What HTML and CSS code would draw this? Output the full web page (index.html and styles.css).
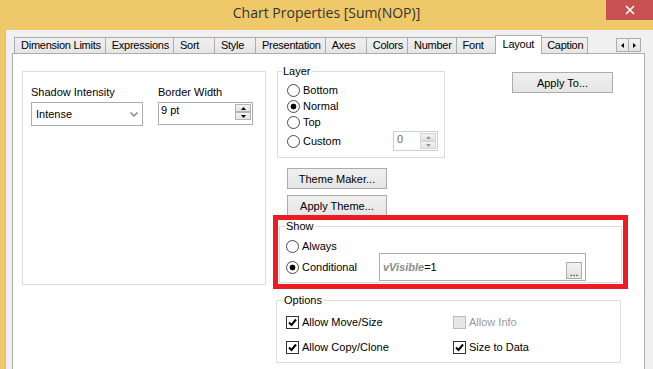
FILE: index.html
```html
<!DOCTYPE html>
<html lang="en">
<head>
    <meta charset="UTF-8">
    <title>Chart Properties [Sum(NOP)]</title>
    <link rel="stylesheet" href="styles.css">
</head>
<body>
    <div class="window">
        <div class="titlebar">
            <h1 class="title">Chart Properties [Sum(NOP)]</h1>
            <div class="close">
                <svg width="10" height="10" viewBox="0 0 10 10"><path d="M1 1 L9 9 M9 1 L1 9" stroke="#fff" stroke-width="1.6"/></svg>
            </div>
        </div>

        <div class="client">
            <div class="tabstrip">
                <div class="tabs">
                    <span class="tab">Dimension Limits</span>
                    <span class="tab">Expressions</span>
                    <span class="tab">Sort</span>
                    <span class="tab">Style</span>
                    <span class="tab">Presentation</span>
                    <span class="tab">Axes</span>
                    <span class="tab">Colors</span>
                    <span class="tab">Number</span>
                    <span class="tab">Font</span>
                    <span class="tab active">Layout</span>
                    <span class="tab">Caption</span>
                </div>
                <div class="tab-scroll">
                    <span class="scroll-btn"><svg width="3" height="5" viewBox="0 0 3 5"><path d="M3 0 L0 2.5 L3 5Z"/></svg></span>
                    <span class="scroll-btn"><svg width="3" height="5" viewBox="0 0 3 5"><path d="M0 0 L3 2.5 L0 5Z"/></svg></span>
                </div>
            </div>

            <div class="panel">
                <!-- shadow / border -->
                <div class="shadow-group">
                    <div class="field">
                        <label>Shadow Intensity</label>
                        <div class="select">
                            <span>Intense</span>
                            <svg width="8" height="5" viewBox="0 0 8 5"><path d="M0.5 0.5 L4 4 L7.5 0.5" fill="none" stroke="#888" stroke-width="1.5"/></svg>
                        </div>
                    </div>
                    <div class="field">
                        <label>Border Width</label>
                        <div class="spin border-spin">
                            <span>9 pt</span>
                            <div class="spin-btns">
                                <span class="spin-btn"><svg width="5" height="3" viewBox="0 0 5 3"><path d="M0 3 L2.5 0 L5 3Z"/></svg></span>
                                <span class="spin-btn"><svg width="5" height="3" viewBox="0 0 5 3"><path d="M0 0 L2.5 3 L5 0Z"/></svg></span>
                            </div>
                        </div>
                    </div>
                </div>

                <div class="right-col">
                    <div class="top-row">
                        <fieldset class="group layer">
                            <legend>Layer</legend>
                            <div class="radio-row"><span class="radio"></span>Bottom</div>
                            <div class="radio-row"><span class="radio checked"></span>Normal</div>
                            <div class="radio-row"><span class="radio"></span>Top</div>
                            <div class="radio-row custom-row">
                                <span class="radio"></span>Custom
                                <div class="spin custom-spin">
                                    <span>0</span>
                                    <div class="spin-btns">
                                        <span class="spin-btn"><svg width="5" height="3" viewBox="0 0 5 3"><path d="M0 3 L2.5 0 L5 3Z"/></svg></span>
                                        <span class="spin-btn"><svg width="5" height="3" viewBox="0 0 5 3"><path d="M0 0 L2.5 3 L5 0Z"/></svg></span>
                                    </div>
                                </div>
                            </div>
                        </fieldset>
                        <button class="btn apply-to">Apply To...</button>
                    </div>

                    <button class="btn theme-btn">Theme Maker...</button>
                    <button class="btn theme-btn apply-theme">Apply Theme...</button>

                    <div class="highlight">
                        <fieldset class="group show">
                            <legend>Show</legend>
                            <div class="radio-row"><span class="radio"></span>Always</div>
                            <div class="radio-row cond-row">
                                <span class="radio checked"></span>
                                <span class="cond-label">Conditional</span>
                                <div class="expr">
                                    <span><b class="var">vVisible</b>=1</span>
                                    <span class="dots">...</span>
                                </div>
                            </div>
                        </fieldset>
                    </div>

                    <fieldset class="group options">
                        <legend>Options</legend>
                        <div class="check-grid">
                            <div class="check-row"><span class="check on"><svg width="11" height="11" viewBox="0 0 11 11"><path d="M2 5.5 L4.5 8 L9 2.5" fill="none" stroke="#000" stroke-width="2"/></svg></span>Allow Move/Size</div>
                            <div class="check-row disabled"><span class="check"></span>Allow Info</div>
                            <div class="check-row"><span class="check on"><svg width="11" height="11" viewBox="0 0 11 11"><path d="M2 5.5 L4.5 8 L9 2.5" fill="none" stroke="#000" stroke-width="2"/></svg></span>Allow Copy/Clone</div>
                            <div class="check-row"><span class="check on"><svg width="11" height="11" viewBox="0 0 11 11"><path d="M2 5.5 L4.5 8 L9 2.5" fill="none" stroke="#000" stroke-width="2"/></svg></span>Size to Data</div>
                        </div>
                    </fieldset>
                </div>
            </div>
        </div>
    </div>
</body>
</html>
```

FILE: styles.css
```css
body {
    margin: 0;
    width: 653px;
    height: 369px;
    overflow: hidden;
    font-family: "Liberation Sans", Arial, sans-serif;
    font-size: 11px;
    color: #000;
}

.window {
    height: 369px;
    background: #efc86a;
    display: flex;
    flex-direction: column;
}

/* title bar */
.titlebar {
    height: 30px;
    flex-shrink: 0;
    display: grid;
    grid-template-columns: 1fr auto 1fr;
}

.title {
    grid-column: 2;
    margin: 0;
    font-family: "Open Sans", sans-serif;
    font-size: 14px;
    font-weight: normal;
    line-height: 26px;
    color: #333;
}

.close {
    grid-column: 3;
    justify-self: end;
    width: 47px;
    height: 20px;
    background: #c75050;
    display: flex;
    align-items: center;
    justify-content: center;
}

.client {
    flex: 1;
    margin-left: 5px;
    border-left: 1px solid #c9c0a5;
    background: #f0f0f0;
    padding: 5px 0 0 6px;
}

/* tabs */
.tabstrip {
    width: 633px;
    height: 18px;
    display: flex;
    align-items: flex-end;
}

.tabs {
    display: flex;
    align-items: flex-end;
    margin-left: 2px;
}

.tab {
    height: 16px;
    box-sizing: border-box;
    min-width: 42px;
    padding: 1px 4px 0 6px;
    margin-right: -1px;
    border: 1px solid #acacac;
    border-bottom: 0;
    background: linear-gradient(#f0f0f0, #e5e5e5);
    line-height: 13px;
    letter-spacing: -0.25px;
    white-space: nowrap;
}

.tab.active {
    position: relative;
    height: 19px;
    margin: 0 -2px -1px -2px;
    padding: 2px 7px 0 7px;
    background: #fff;
}

.tab-scroll {
    display: flex;
    align-self: flex-start;
    margin: 3px 4px 0 auto;
}

.scroll-btn {
    width: 13px;
    height: 14px;
    box-sizing: border-box;
    margin-left: -1px;
    border: 1px solid #acacac;
    background: linear-gradient(#f2f2f2, #e5e5e5);
    display: flex;
    align-items: center;
    justify-content: center;
}

/* tab page */
.panel {
    width: 633px;
    height: 330px;
    box-sizing: border-box;
    border: 1px solid #adadad;
    background: #fff;
    display: flex;
    align-items: flex-start;
    padding-left: 9px;
}

.shadow-group {
    margin-top: 17px;
    width: 244px;
    height: 214px;
    box-sizing: border-box;
    border: 1px solid #dcdcdc;
    padding: 14px 0 0 8px;
    display: flex;
    gap: 15px;
}

.field label {
    display: block;
    line-height: 13px;
    margin-bottom: 3px;
}

.select {
    width: 112px;
    height: 24px;
    box-sizing: border-box;
    border: 1px solid #acacac;
    padding: 0 4px;
    display: flex;
    align-items: center;
    justify-content: space-between;
}

.spin {
    box-sizing: border-box;
    border: 1px solid #abadb3;
    background: #fff;
    display: flex;
    justify-content: space-between;
    align-items: flex-start;
    line-height: 14px;
}

.border-spin {
    width: 95px;
    height: 23px;
    padding-left: 2px;
}

.spin-btns {
    display: flex;
    flex-direction: column;
    margin: 1px 1px 0 0;
}

.spin-btn {
    width: 16px;
    height: 8px;
    box-sizing: border-box;
    border: 1px solid #b5b5b5;
    background: linear-gradient(#f4f4f4, #e3e3e3);
    display: flex;
    align-items: center;
    justify-content: center;
}

/* right column */
.right-col {
    margin: 11px 0 0 7px;
    display: flex;
    flex-direction: column;
    align-items: flex-start;
}

.top-row {
    display: flex;
    align-items: flex-start;
    margin-left: 4px;
}

.group {
    margin: 0;
    min-width: 0;
    box-sizing: border-box;
    border: 1px solid #dcdcdc;
}

.group legend {
    padding: 0 1px;
    line-height: 13px;
}

.layer {
    width: 168px;
    padding: 4px 6px 6px 4px;
}

.radio-row {
    display: flex;
    align-items: center;
    height: 16px;
    padding-left: 5px;
}

.radio {
    width: 13px;
    height: 13px;
    box-sizing: border-box;
    border: 1px solid #4a4a4a;
    border-radius: 50%;
    background: #fff;
    margin-right: 3px;
    flex-shrink: 0;
}

.radio.checked {
    background: radial-gradient(circle, #000 0 2.6px, #fff 3.2px);
}

.custom-row {
    height: 20px;
    margin-top: 1px;
}

.custom-spin {
    margin-left: auto;
    width: 45px;
    height: 20px;
    padding-left: 3px;
    border-color: #cfcfcf;
    color: #6d6d6d;
}

.custom-spin .spin-btn {
    border-color: #d5d5d5;
    fill: #999;
}

.btn {
    font: inherit;
    color: #000;
    padding: 0;
    box-sizing: border-box;
    height: 21px;
    border: 1px solid #acacac;
    background: linear-gradient(#f0f0f0, #e5e5e5);
}

.apply-to {
    width: 101px;
    margin: 7px 0 0 67px;
}

.theme-btn {
    width: 100px;
    margin: 10px 0 0 14px;
}

.apply-theme {
    margin-top: 6px;
}

/* red annotation frame */
.highlight {
    position: relative;
    margin-top: -1px;
    width: 355px;
    box-sizing: border-box;
    border: 5px solid #ed1c24;
}

.show {
    margin: 0 1px 1px 1px;
    padding: 5px 0 1px 5px;
}

.show .radio-row {
    padding-left: 1px;
}

.cond-row {
    height: 28px;
    margin-top: -1px;
}

.cond-label {
    width: 77px;
}

.expr {
    width: 207px;
    height: 28px;
    box-sizing: border-box;
    border: 1px solid #acacac;
    padding-left: 3px;
    display: flex;
    align-items: center;
    justify-content: space-between;
}

.var {
    color: #8c8c8c;
    font-style: italic;
}

.dots {
    align-self: flex-end;
    width: 16px;
    height: 17px;
    box-sizing: border-box;
    margin: 0 3px 1px 0;
    border: 1px solid #acacac;
    background: linear-gradient(#f2f2f2, #e3e3e3);
    text-align: center;
    line-height: 18px;
}

.options {
    margin: 5px 0 0 3px;
    width: 345px;
    padding: 7px 0 7px 6px;
}

.check-grid {
    display: grid;
    grid-template-columns: 167px auto;
    row-gap: 9px;
    padding-left: 3px;
}

.check-row {
    display: flex;
    align-items: center;
    height: 16px;
}

.check {
    width: 13px;
    height: 13px;
    box-sizing: border-box;
    border: 1px solid #333;
    background: #fff;
    margin-right: 3px;
    display: flex;
    align-items: center;
    justify-content: center;
}

.disabled {
    color: #9a9a9a;
}

.disabled .check {
    border-color: #bcbcbc;
    background: #e6e6e6;
}
```
